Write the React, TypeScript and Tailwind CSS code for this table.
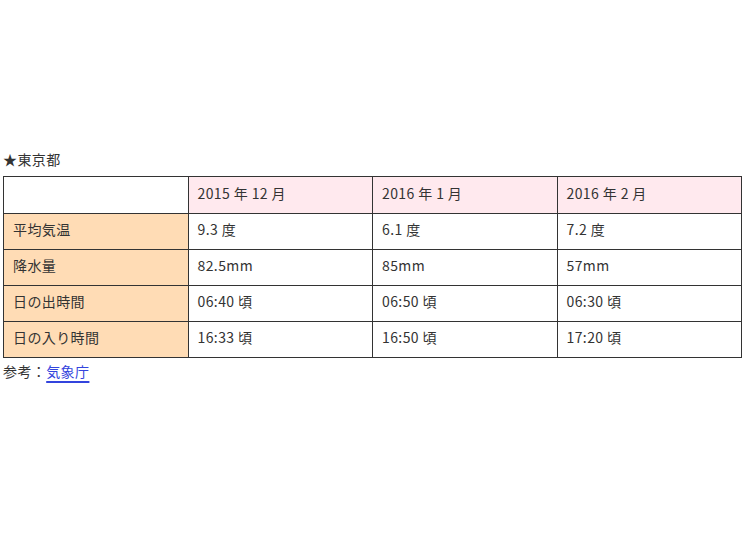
const rows = [
  { label: "平均気温", values: ["9.3 度", "6.1 度", "7.2 度"] },
  { label: "降水量", values: ["82.5mm", "85mm", "57mm"] },
  { label: "日の出時間", values: ["06:40 頃", "06:50 頃", "06:30 頃"] },
  { label: "日の入り時間", values: ["16:33 頃", "16:50 頃", "17:20 頃"] },
];

const months = ["2015 年 12 月", "2016 年 1 月", "2016 年 2 月"];

export default function App() {
  return (
    <div
      className="min-h-[536px] bg-white px-[3px] pt-[149px] text-[14px] leading-[20px] tracking-[0.4px] text-[#333]"
      style={{ fontFamily: '"Noto Sans CJK JP", "Noto Sans", sans-serif' }}
    >
      <p className="mb-[7px]">★東京都</p>
      <table className="w-[739px] table-fixed border-collapse">
        <tbody>
          <tr>
            <td className="h-[37px] border border-[#333] bg-white"></td>
            {months.map((m) => (
              <td
                key={m}
                className="h-[37px] border border-[#333] bg-[#ffe9ee] px-[9px] pb-[9px] pt-[6px] align-top"
              >
                {m}
              </td>
            ))}
          </tr>
          {rows.map((r) => (
            <tr key={r.label}>
              <td className="h-[36px] border border-[#333] bg-[#ffdcb5] px-[9px] pb-[8px] pt-[5px] align-top">
                {r.label}
              </td>
              {r.values.map((v, i) => (
                <td
                  key={i}
                  className="h-[36px] border border-[#333] bg-white px-[9px] pb-[8px] pt-[5px] align-top"
                >
                  {v}
                </td>
              ))}
            </tr>
          ))}
        </tbody>
      </table>
      <p className="mt-[3px]">
        参考：
        <a
          href="#"
          className="text-[#3344dd] underline decoration-[#3344dd] decoration-2 underline-offset-[4px]"
        >
          気象庁
        </a>
      </p>
    </div>
  );
}
